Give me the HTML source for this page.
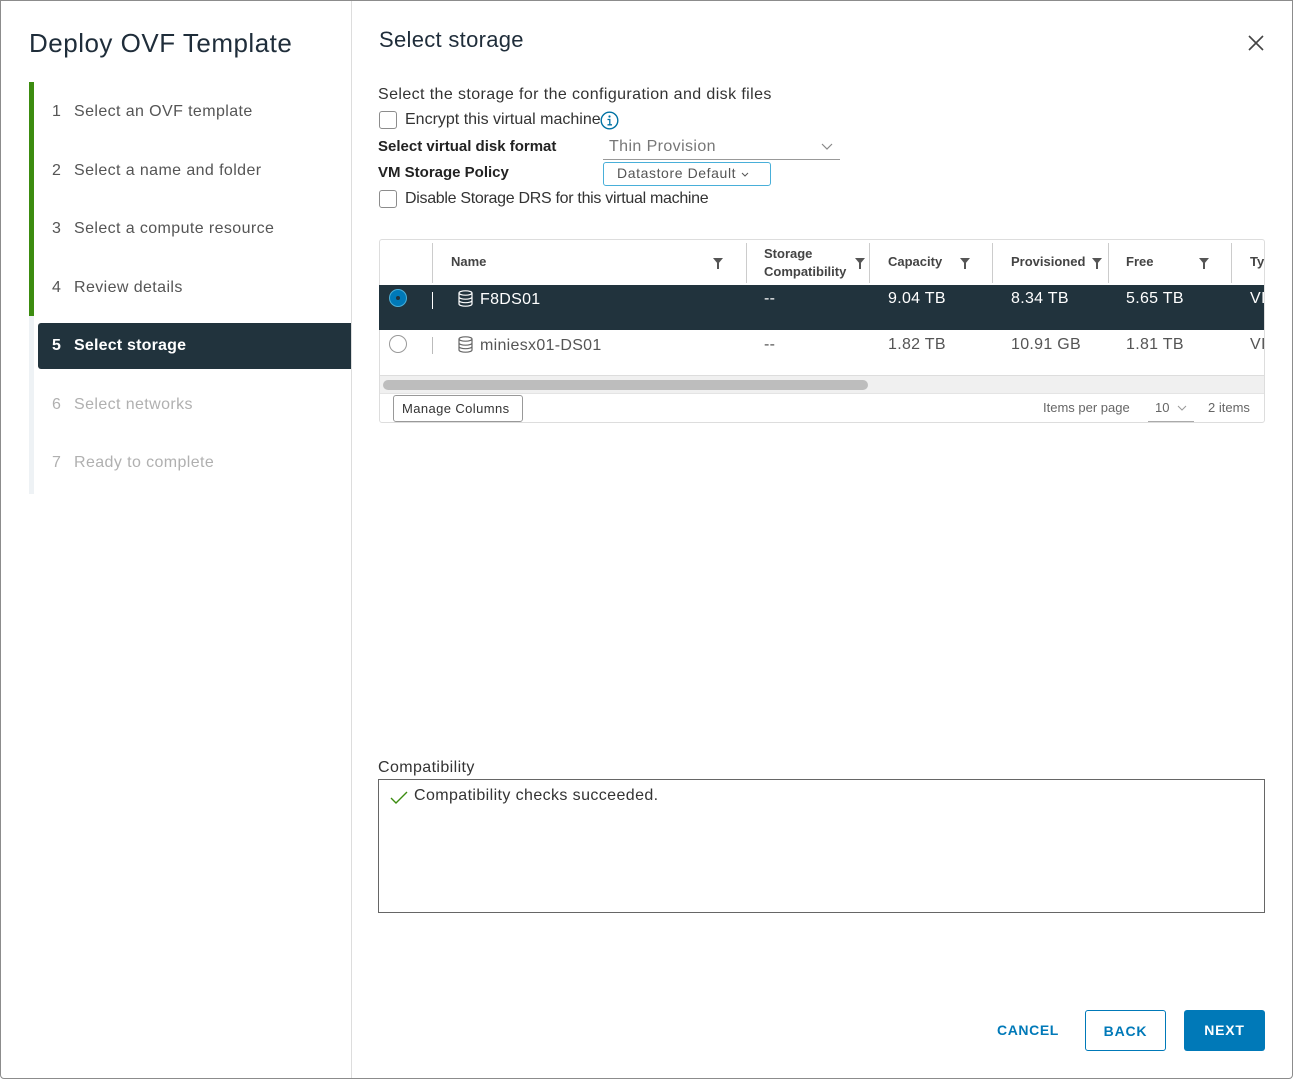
<!DOCTYPE html>
<html><head><meta charset="utf-8"><style>
*{box-sizing:border-box;margin:0;padding:0}
body{width:1293px;height:1079px;background:#fff;font-family:"Liberation Sans",sans-serif;color:#333;position:relative;overflow:hidden}
.a{position:absolute;white-space:nowrap}
.t{font-size:16px;letter-spacing:.4px}
.frame{position:absolute;left:0;top:0;width:1293px;height:1079px;border:1px solid #8c8c8c;border-radius:0 0 4px 4px}
.step{position:absolute;left:52px;font-size:16px;letter-spacing:.4px;color:#555}
.step span{display:inline-block;width:22px}
.dis{color:#b0b0b0}
.cb{position:absolute;width:18px;height:18px;border:1px solid #8c8c8c;border-radius:3px;background:#fff}
.th{position:absolute;top:240px;height:44px;font-size:13px;color:#444;font-weight:bold}
.sep{position:absolute;top:243px;width:1px;height:40px;background:#ccc}
.fil{position:absolute;top:258px;width:0;height:0;border-left:5px solid transparent;border-right:5px solid transparent;border-top:6px solid #555}
.fil:after{content:"";position:absolute;left:-1px;top:-1px;width:2px;height:6px;background:#555}
.cell{position:absolute;font-size:16px;letter-spacing:.3px}
</style></head><body>
<div class="frame"></div>
<div class="a" style="left:351px;top:1px;width:1px;height:1077px;background:#ddd"></div>
<div class="a" style="left:29px;top:28px;font-size:26px;letter-spacing:.5px;color:#1f2d3a">Deploy OVF Template</div>
<div class="a" style="left:29px;top:82px;width:5px;height:234px;background:#3c8c10"></div>
<div class="a" style="left:29px;top:316px;width:5px;height:178px;background:#eef2f5"></div>
<div class="step" style="top:103px"><span>1</span>Select an OVF template</div>
<div class="step" style="top:162px"><span>2</span>Select a name and folder</div>
<div class="step" style="top:220px"><span>3</span>Select a compute resource</div>
<div class="step" style="top:279px"><span>4</span>Review details</div>
<div class="a" style="left:38px;top:323px;width:313px;height:46px;background:#21333d;border-radius:3px 0 0 3px"></div>
<div class="step" style="top:337px;color:#fff;font-weight:bold;letter-spacing:.2px"><span>5</span>Select storage</div>
<div class="step dis" style="top:396px"><span>6</span>Select networks</div>
<div class="step dis" style="top:454px"><span>7</span>Ready to complete</div>

<div class="a" style="left:379px;top:27px;font-size:22px;letter-spacing:.3px;color:#1f2d3a">Select storage</div>
<svg class="a" style="left:1248px;top:35px" width="16" height="16"><path d="M1 1L15 15M15 1L1 15" stroke="#444" stroke-width="1.6"/></svg>

<div class="a t" style="left:378px;top:86px">Select the storage for the configuration and disk files</div>
<div class="cb" style="left:379px;top:111px"></div>
<div class="a" style="left:405px;top:111px;font-size:16px;letter-spacing:0">Encrypt this virtual machine</div>
<svg class="a" style="left:600px;top:111px" width="19" height="19"><circle cx="9.5" cy="9.5" r="8.3" fill="none" stroke="#0072a3" stroke-width="1.4"/><circle cx="9.5" cy="5.5" r="1.1" fill="#0072a3"/><path d="M7.5 8.5h2.3v5M7.5 13.8h4.5" stroke="#0072a3" stroke-width="1.3" fill="none"/></svg>
<div class="a" style="left:378px;top:138px;font-size:15px;font-weight:bold;color:#222;letter-spacing:0">Select virtual disk format</div>
<div class="a t" style="left:609px;top:138px;color:#777">Thin Provision</div>
<svg class="a" style="left:821px;top:143px" width="12" height="8"><path d="M1 1l5 5 5-5" stroke="#888" fill="none" stroke-width="1.2"/></svg>
<div class="a" style="left:603px;top:159px;width:237px;height:1px;background:#999"></div>
<div class="a" style="left:378px;top:164px;font-size:15px;font-weight:bold;color:#222;letter-spacing:0">VM Storage Policy</div>
<div class="a" style="left:603px;top:162px;width:168px;height:24px;border:1px solid #49afd9;border-radius:3px;font-size:14px;color:#555;padding:2px 0 0 13px;letter-spacing:.6px">Datastore Default <svg width="8" height="6"><path d="M1 1l3 3 3-3" stroke="#555" fill="none"/></svg></div>
<div class="cb" style="left:379px;top:190px"></div>
<div class="a" style="left:405px;top:190px;font-size:16px;letter-spacing:-.3px">Disable Storage DRS for this virtual machine</div>

<div class="a" style="left:379px;top:239px;width:886px;height:184px;border:1px solid #ddd;border-radius:3px"></div>
<div class="sep" style="left:432px"></div><div class="sep" style="left:746px"></div><div class="sep" style="left:869px"></div><div class="sep" style="left:992px"></div><div class="sep" style="left:1108px"></div><div class="sep" style="left:1231px"></div>
<div class="th" style="left:451px;top:254px">Name</div>
<div class="th" style="left:764px;top:245px;line-height:18px">Storage<br>Compatibility</div>
<div class="th" style="left:888px;top:254px">Capacity</div>
<div class="th" style="left:1011px;top:254px">Provisioned</div>
<div class="th" style="left:1126px;top:254px">Free</div>
<div class="th" style="left:1250px;top:254px">Ty</div>
<div class="fil" style="left:713px"></div><div class="fil" style="left:855px"></div><div class="fil" style="left:960px"></div><div class="fil" style="left:1092px"></div><div class="fil" style="left:1199px"></div>
<div class="a" style="left:379px;top:285px;width:885px;height:45px;background:#21333d"></div>
<div class="a" style="left:389px;top:289px;width:18px;height:18px;border-radius:50%;background:#0079b8;border:1px solid #49afd9"></div>
<div class="a" style="left:396px;top:296px;width:4px;height:4px;border-radius:50%;background:#21333d"></div>
<div class="a" style="left:432px;top:292px;width:1px;height:17px;background:#fff"></div>
<svg class="a" style="left:458px;top:290px" width="15" height="17"><g fill="none" stroke="#fff" stroke-width="1.2"><ellipse cx="7.5" cy="3" rx="6.5" ry="2.2"/><path d="M1 3v11c0 1.2 3 2.2 6.5 2.2S14 15.2 14 14V3M1 7c0 1.2 3 2.2 6.5 2.2S14 8.2 14 7M1 10.5c0 1.2 3 2.2 6.5 2.2s6.5-1 6.5-2.2"/></g></svg>
<div class="cell" style="left:480px;top:291px;color:#fff">F8DS01</div>
<div class="cell" style="left:764px;top:290px;color:#fff">--</div>
<div class="cell" style="left:888px;top:290px;color:#fff">9.04 TB</div>
<div class="cell" style="left:1011px;top:290px;color:#fff">8.34 TB</div>
<div class="cell" style="left:1126px;top:290px;color:#fff">5.65 TB</div>
<div class="cell" style="left:1250px;top:290px;color:#fff">VI</div>
<div class="a" style="left:389px;top:335px;width:18px;height:18px;border-radius:50%;border:1px solid #999"></div>
<div class="a" style="left:432px;top:337px;width:1px;height:17px;background:#bbb"></div>
<svg class="a" style="left:458px;top:336px" width="15" height="17"><g fill="none" stroke="#666" stroke-width="1.2"><ellipse cx="7.5" cy="3" rx="6.5" ry="2.2"/><path d="M1 3v11c0 1.2 3 2.2 6.5 2.2S14 15.2 14 14V3M1 7c0 1.2 3 2.2 6.5 2.2S14 8.2 14 7M1 10.5c0 1.2 3 2.2 6.5 2.2s6.5-1 6.5-2.2"/></g></svg>
<div class="cell" style="left:480px;top:337px;color:#555">miniesx01-DS01</div>
<div class="cell" style="left:764px;top:336px;color:#555">--</div>
<div class="cell" style="left:888px;top:336px;color:#555">1.82 TB</div>
<div class="cell" style="left:1011px;top:336px;color:#555">10.91 GB</div>
<div class="cell" style="left:1126px;top:336px;color:#555">1.81 TB</div>
<div class="cell" style="left:1250px;top:336px;color:#555">VI</div>
<div class="a" style="left:380px;top:375px;width:884px;height:19px;background:#f0f0f0;border-top:1px solid #ddd;border-bottom:1px solid #e4e4e4"></div>
<div class="a" style="left:383px;top:380px;width:485px;height:10px;border-radius:5px;background:#bdbdbd"></div>
<div class="a" style="left:393px;top:395px;width:130px;height:27px;border:1px solid #999;border-radius:3px;font-size:13px;color:#333;padding:5px 0 0 8px;letter-spacing:.4px">Manage Columns</div>
<div class="a" style="left:1043px;top:400px;font-size:13px;color:#666">Items per page</div>
<div class="a" style="left:1155px;top:400px;font-size:13px;color:#666">10</div>
<svg class="a" style="left:1177px;top:405px" width="10" height="6"><path d="M1 1l4 4 4-4" stroke="#999" fill="none"/></svg>
<div class="a" style="left:1148px;top:421px;width:46px;height:1px;background:#aaa"></div>
<div class="a" style="left:1208px;top:400px;font-size:13px;color:#666">2 items</div>

<div class="a t" style="left:378px;top:759px">Compatibility</div>
<div class="a" style="left:378px;top:779px;width:887px;height:134px;border:1px solid #666"></div>
<svg class="a" style="left:390px;top:791px" width="18" height="14"><path d="M1 7l5 5 11-11" stroke="#3c8c10" stroke-width="1.4" fill="none"/></svg>
<div class="a t" style="left:414px;top:787px">Compatibility checks succeeded.</div>

<div class="a" style="left:997px;top:1022px;font-size:14px;font-weight:bold;color:#0079b8;letter-spacing:.6px">CANCEL</div>
<div class="a" style="left:1085px;top:1010px;width:81px;height:41px;border:1px solid #0079b8;border-radius:3px;font-size:14px;font-weight:bold;color:#0079b8;letter-spacing:.8px;text-align:center;padding-top:12px">BACK</div>
<div class="a" style="left:1184px;top:1010px;width:81px;height:41px;background:#0079b8;border-radius:3px;font-size:14px;font-weight:bold;color:#fff;letter-spacing:.8px;text-align:center;padding-top:12px">NEXT</div>
</body></html>
